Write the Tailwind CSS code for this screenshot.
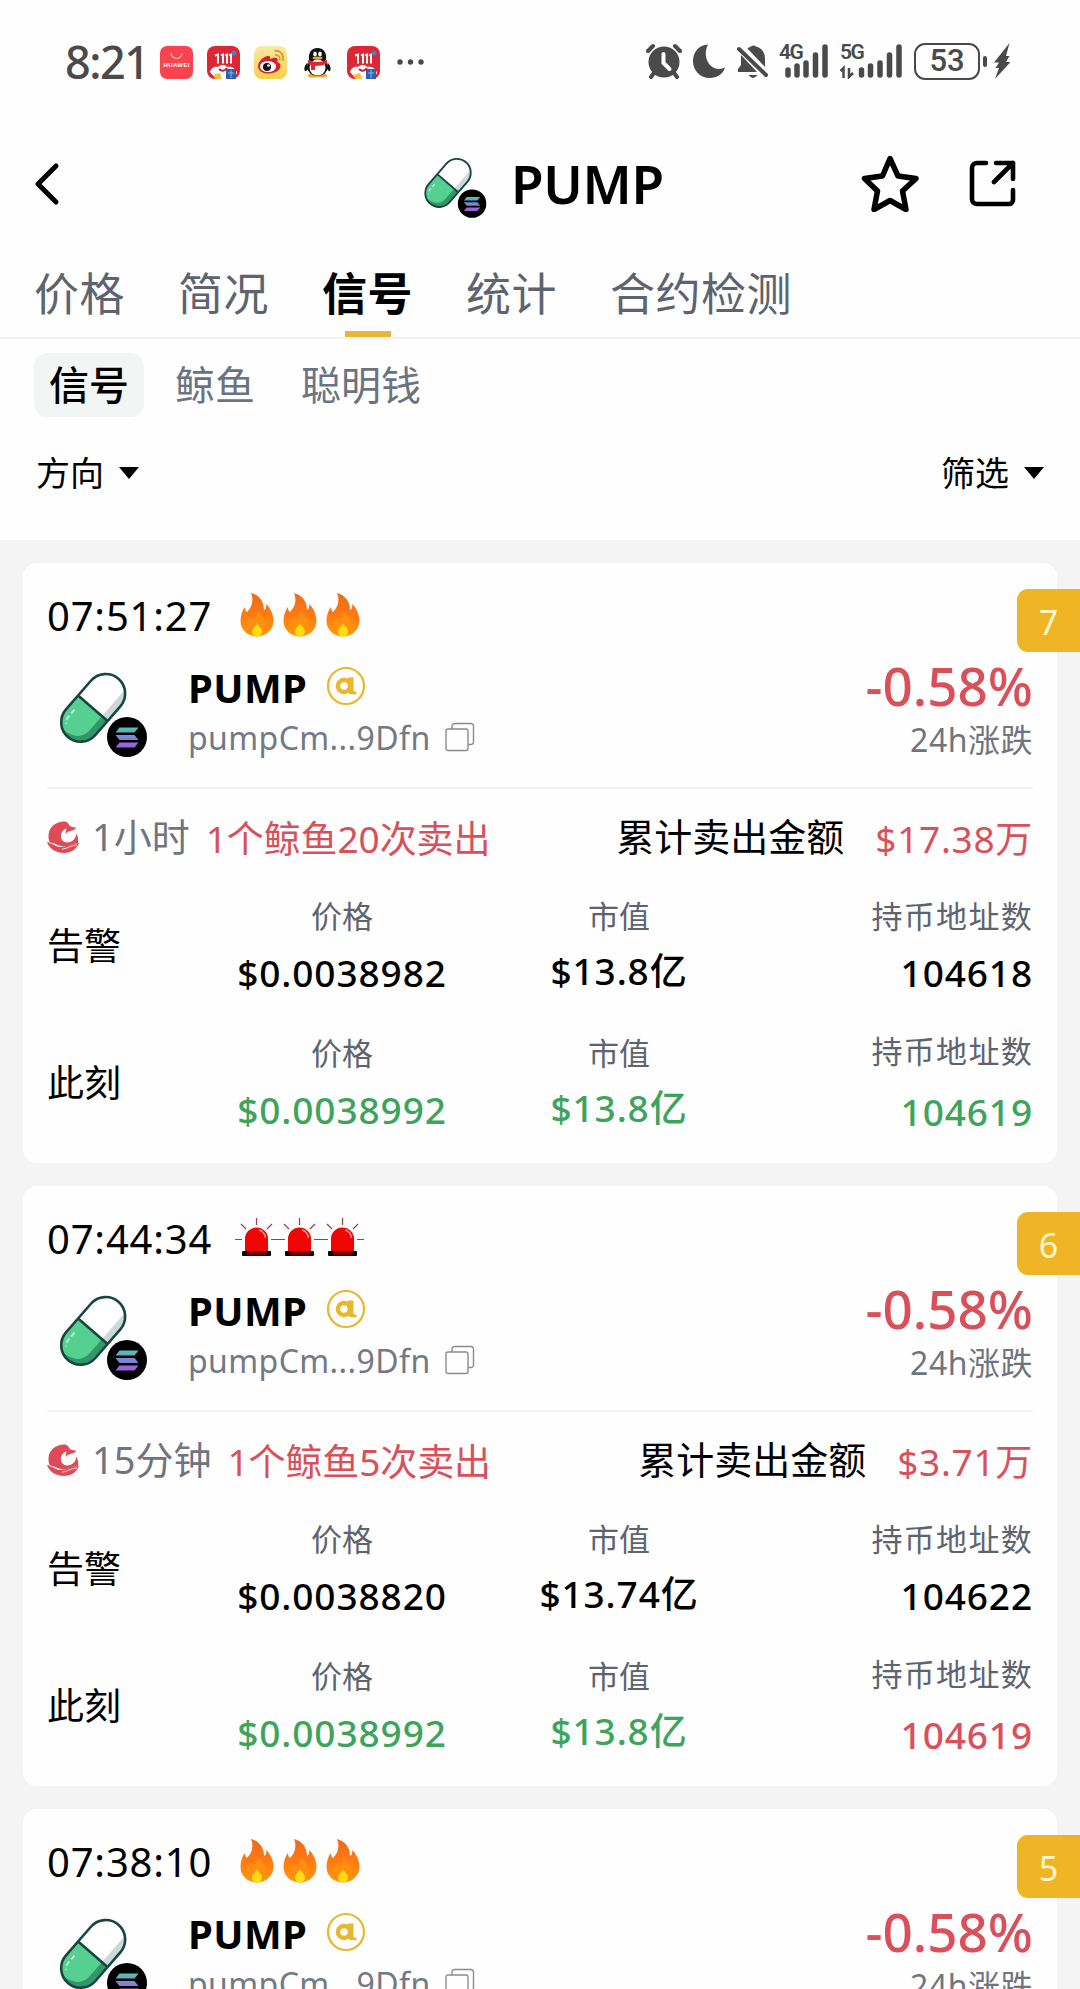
<!DOCTYPE html>
<html lang="zh-CN">
<head>
    <meta charset="UTF-8">
    <meta name="viewport" content="width=device-width, initial-scale=1.0">
    <title>PUMP</title>
    <script src="https://cdn.jsdelivr.net/npm/@tailwindcss/browser@4"></script>
</head>
<body class="flex h-[1989px] w-[1080px] flex-col overflow-hidden bg-[#fefefe] font-['Noto_Sans','Noto_Sans_CJK_SC',sans-serif] text-black">

<!-- shared icons -->
<svg class="absolute h-0 w-0">
    <defs>
        <linearGradient id="sol" gradientUnits="userSpaceOnUse" x1="0" y1="57" x2="0" y2="78">
            <stop offset="0" stop-color="#4cc9b0"/><stop offset="0.5" stop-color="#7d83d6"/><stop offset="1" stop-color="#a557e0"/>
        </linearGradient>
        <linearGradient id="fireFill" x1="0" y1="0" x2="0" y2="1">
            <stop offset="0" stop-color="#ec6a1c"/><stop offset="0.5" stop-color="#ff7a12"/><stop offset="1" stop-color="#ff9a0a"/>
        </linearGradient>
        <linearGradient id="weiboFill" x1="0" y1="0" x2="0" y2="1">
            <stop offset="0" stop-color="#fbe9a6"/><stop offset="1" stop-color="#f8cf45"/>
        </linearGradient>
    </defs>
    <symbol id="pill" viewBox="0 0 90 90">
        <g transform="translate(35.5 37.5) rotate(41)">
            <path d="M-19.500 1V-18.500a19.500 19.500 0 0 1 39 0V1Z" fill="#fff"/>
            <path d="M12 1V-34c5 4 7.500 9 7.500 15.500V1Z" fill="#cdd8d8"/>
            <path d="M-19.500 1V19.500a19.500 19.500 0 0 0 39 0V1Z" fill="#56d090"/>
            <path d="M19.500 1V19.500a19.500 19.500 0 0 1-28 17.500C6 36 12 29 12 19V1Z" fill="#329768"/>
            <path d="M-13 14v9c0 3 1 5 3 7" stroke="#b5f2cf" stroke-width="2" stroke-dasharray="5 3" fill="none"/>
            <path d="M-19.500 1H19.500M-19.500-18.500a19.500 19.500 0 0 1 39 0V19.500a19.500 19.500 0 0 1-39 0Z" fill="none" stroke="#17463f" stroke-width="2.600"/>
        </g>
        <circle cx="69" cy="67" r="20" fill="#000"/>
        <path d="M61.500 57.500h19l-4 5h-19ZM57.500 65h19l4 5h-19ZM61.500 72.500h19l-4 5h-19Z" fill="url(#sol)"/>
    </symbol>
    <symbol id="fire" viewBox="0 0 34 44">
        <path d="M11 0c8 2 13 8 13 17 2-1 2.500-3 2.300-6C30 15 33.500 21 33.500 27.500 33.500 37 26 43.500 17 43.500S.5 37 .5 28C.5 22 2.500 17 5 14c0 2 .5 4 2 5C12 14 14 7 11 0Z" fill="url(#fireFill)"/>
        <path d="M17 17c2 5 9 7 9 15 0 6-4 10-9 10S7 38 7 32c0-4 3-5 4-8 1 1 2 2 2 4 3-2 5-6 4-11Z" fill="#ff8f0f"/>
        <path d="M17 30c1 3 5 5 5 8.500 0 3-2 5-5 5s-5-2-5-5c0-3.500 4-5 5-8.500Z" fill="#ffdc12"/>
    </symbol>
    <symbol id="siren" viewBox="0 0 43 44">
        <path d="M21.500 1v7M6 7l5 5M37 7l-5 5M0 22.500h7M36 22.500h7" stroke="#a03c46" stroke-width="1.200"/>
        <path d="M10 35V22a11.500 11.500 0 0 1 23 0v13Z" fill="#f00505"/>
        <path d="M24 13c4 1 6 4 6.500 8" stroke="#ff8a80" stroke-width="1.500" fill="none"/>
        <rect x="7" y="34" width="29" height="5" rx="1" fill="#150000"/>
        <rect x="12" y="34" width="19" height="4" fill="#6d0000"/>
    </symbol>
    <symbol id="whale" viewBox="0 0 32 32">
        <path d="M18 .6C8 .3 1.500 7 1.500 15c0 3 .5 5 1.500 7 6 0 8 3.500 14 3.500 5 0 8-3 14-3.500.7-4-.2-7-1.800-9.500C29 18 25 21.500 20.500 21.500c-4.500 0-7-3.500-6.500-7.500.5-3.500 2.500-6 5.500-6.500-.5 2-.7 3.500-1 5.500C21.500 9 27 10.500 29.500 6.500 27 6.500 24 6 22.500 4.500 21.500 2.500 20 .8 18 .6Z" fill="#dd4c56"/>
        <path d="M0 21c5 0 8 5 14 5s10-3.500 18-4C29.500 28.500 24 32 17 32 9 32 2.500 28 0 21Z" fill="#dd4c56"/>
        <path d="M2 21.500c5 1 8 4.500 13 4M15 28c5 0 8-3.500 15-4" stroke="#fff" stroke-width=".8" fill="none"/>
    </symbol>
    <symbol id="copy" viewBox="0 0 30 30">
        <path d="M7 7V4a2.500 2.500 0 0 1 2.500-2.500H26A2.500 2.500 0 0 1 28.500 4v16a2.500 2.500 0 0 1-2.500 2.500h-3" fill="none" stroke="#8b8b8f" stroke-width="1.400"/>
        <rect x="1" y="7" width="22" height="21.500" rx="2" fill="none" stroke="#8b8b8f" stroke-width="1.400"/>
    </symbol>
    <symbol id="shop" viewBox="0 0 33 33">
        <rect width="33" height="33" rx="8" fill="#dd2734"/>
        <path d="M8 9.500l3-1v9M14 9.500l2-1v9M18 9.500l2-1v9M22 9.500l2-1v9" stroke="#fff" stroke-width="1.900" fill="none"/>
        <circle cx="27" cy="7" r="2.500" fill="#4a80c4"/>
        <path d="M3 26c1-5 6-6 8-5 3-3 8-2 9 0 5-1 9 2 10 6l-4 6H9Z" fill="#fff"/>
        <path d="M12 23q4 4 8-1" stroke="#c71f2d" stroke-width="2" fill="none"/>
        <path d="M6 29l7-2 2 6H9Z" fill="#f3c23c"/>
        <rect x="19" y="23" width="10" height="10" fill="#2d5fb0"/>
        <path d="M21 27h6M24 24v8" stroke="#8db4ea" stroke-width="1"/>
    </symbol>
</svg>

<!-- status bar -->
<div class="flex h-[124px] shrink-0 items-center justify-between pr-[69px] pl-[65px] text-[#4a4a4a]">
    <div class="flex items-center">
        <span class="w-[95px] text-[45px] leading-[50px] font-medium tracking-[-1.5px]">8:21</span>
        <svg class="h-[33px] w-[33px]" viewBox="0 0 33 33">
            <rect width="33" height="33" rx="7" fill="#f9434f"/>
            <path d="M11 7a5.500 5.500 0 0 0 11 0" stroke="#ffc2b0" stroke-width="1.200" fill="none"/>
            <text x="16.500" y="21" text-anchor="middle" textLength="26" font-family="Liberation Sans" font-size="6" font-weight="bold" fill="#fff">HUAWEI</text>
        </svg>
        <svg class="ml-[14px] h-[33px] w-[33px]"><use href="#shop"/></svg>
        <svg class="ml-[14px] h-[33px] w-[33px]" viewBox="0 0 33 33">
            <rect width="33" height="33" rx="8" fill="url(#weiboFill)"/>
            <path d="M4 20c0-5 7-11 11-10 2 .5 1 3 1 3s6-3 7.500 0c.5 1.500-.5 3-.5 3s4 1 3.500 4.500C26 25 20 27.500 14 27.500S4 24.500 4 20Z" fill="#d9212c"/>
            <ellipse cx="14" cy="20.500" rx="8" ry="5.500" fill="#fff"/>
            <circle cx="13" cy="21" r="4" fill="#151515"/><circle cx="14.500" cy="19.500" r="1.300" fill="#fff"/>
            <path d="M21 9c3-.5 5.500 2 4.500 5M20.500 5c6-1 10 4 8 10" fill="none" stroke="#d9a233" stroke-width="2"/>
        </svg>
        <svg class="ml-[17px] h-[33px] w-[27px]" viewBox="0 0 27 33">
            <path d="M3 17c-3 3-3 7-2 8s3-2 3-2M24 17c3 3 3 7 2 8s-3-2-3-2" fill="#111"/>
            <ellipse cx="9" cy="29.500" rx="5" ry="2" fill="#f4a61f"/><ellipse cx="18" cy="29.500" rx="5" ry="2" fill="#f4a61f"/>
            <ellipse cx="13.500" cy="20.500" rx="10.500" ry="9.500" fill="#111"/>
            <path d="M5 14C4 6 8 2 13.500 2S23 6 22 14Z" fill="#111"/>
            <ellipse cx="13.500" cy="21.500" rx="8" ry="8" fill="#fff"/>
            <ellipse cx="11" cy="8" rx="1.800" ry="2.500" fill="#fff"/><ellipse cx="16" cy="8" rx="1.800" ry="2.500" fill="#fff"/>
            <ellipse cx="13.500" cy="12" rx="5" ry="1.500" fill="#f4a61f"/>
            <path d="M4 14q9.500 4 19 0v4q-6 2-12 2v4H7v-5l-3-1Z" fill="#df2530"/>
        </svg>
        <svg class="ml-[16px] h-[33px] w-[33px]"><use href="#shop"/></svg>
        <svg class="ml-[17px] h-[6px] w-[28px]" viewBox="0 0 28 6" fill="currentColor"><circle cx="3" cy="3" r="2.700"/><circle cx="13.500" cy="3" r="2.700"/><circle cx="24" cy="3" r="2.700"/></svg>
    </div>
    <div class="flex items-center pb-[2px]">
        <svg class="h-[36px] w-[36px]" viewBox="0 0 36 36" fill="currentColor">
            <circle cx="18" cy="19" r="15.500"/>
            <path d="M2 8l5-5M34 8l-5-5M8 30l-3 4M28 30l3 4" stroke="currentColor" stroke-width="4" stroke-linecap="round"/>
            <path d="M17.500 11v9l6 6" stroke="#fff" stroke-width="4" stroke-linecap="round" fill="none"/>
        </svg>
        <svg class="ml-[11px] h-[34px] w-[33px]" viewBox="0 0 33 34"><path d="M15 .5C6 1 0 8 0 17c0 10 7.500 17 16.500 17C24 34 30 30 32 23.500c-5 2.500-11 1.500-14.500-2C12 16 11.500 7 15 .5Z" fill="currentColor"/></svg>
        <svg class="ml-[11px] h-[36px] w-[32px]" viewBox="0 0 32 36">
            <path d="M10.500 5.500C11.500 4.500 12.500 4 14 3.500a4 4 0 0 1 5 0C25 5 28 10 28 16v8ZM4 12l16 17H1v-3l3-4Z" fill="currentColor"/>
            <path d="M3 4l27 26" stroke="#fefefe" stroke-width="4"/>
            <path d="M2 6l27 26" stroke="currentColor" stroke-width="4" stroke-linecap="round"/>
            <path d="M11.500 32h9q-4.500 6-9 0Z" fill="currentColor"/>
        </svg>
        <div class="ml-[10px] flex h-[36px] w-[52px]">
            <span class="-mr-[25px] -mt-[4px] w-[25px] text-[21px] leading-[26px] font-semibold tracking-[-1.5px] font-['Roboto']">4G</span>
            <svg class="h-[36px] w-[52px] shrink-0" viewBox="2 0 52 36"><path d="M11 27v5M20 23v9M29 20v12M38.500 12v20M48 4v28" stroke="currentColor" stroke-width="5.500" stroke-linecap="round"/></svg>
        </div>
        <div class="ml-[9px] flex h-[36px] w-[65px]">
            <span class="-mr-[25px] -mt-[4px] w-[25px] text-[21px] leading-[26px] font-semibold tracking-[-1.5px] font-['Roboto']">5G</span>
            <svg class="h-[36px] w-[65px] shrink-0" viewBox="1 0 65 36">
                <path d="M22.500 27v5M31.500 23v9M41 20v12M50.500 12v20M60 4v28" stroke="currentColor" stroke-width="5.500" stroke-linecap="round"/>
                <path d="M1.500 28l3-3v10M10 25v9l4-4" fill="none" stroke="currentColor" stroke-width="2.500"/>
            </svg>
        </div>
        <div class="ml-[9px] flex h-[37px] w-[66px] items-center justify-center rounded-[11px] border-[2.5px] border-[#4a4a4a] font-['Roboto'] text-[31px] leading-[34px] font-medium">53</div>
        <div class="ml-[3px] h-[11px] w-[4px] rounded-full bg-[#4a4a4a]"></div>
        <svg class="ml-[7px] h-[36px] w-[17px]" viewBox="0 0 17 36"><path d="M15.500 0L0 19.500h5L1.500 25H5L1 36l15.500-17H12l3.500-6H12Z" fill="currentColor"/></svg>
    </div>
</div>

<!-- header -->
<div class="flex h-[120px] shrink-0 items-center">
    <svg class="ml-[34px] h-[44px] w-[26px]" viewBox="0 0 26 44"><path d="M22 4L4 22l18 18" fill="none" stroke="#000" stroke-width="5" stroke-linecap="round" stroke-linejoin="round"/></svg>
    <svg class="mt-[8px] ml-[363px] h-[64px] w-[64px]"><use href="#pill"/></svg>
    <span class="ml-[24px] w-[200px] text-[53px] leading-[60px] font-semibold tracking-[-0.3px]">PUMP</span>
    <svg class="-mt-[3px] ml-[149px] h-[58px] w-[60px]" viewBox="0 0 60 58"><path d="M30 4.500l8 17.500 18 2.500-13.500 12.500 3.500 18.500-16-9-16 9 3.500-18.500L4.500 24.500 22.500 22Z" fill="none" stroke="#000" stroke-width="5.500" stroke-linejoin="round"/></svg>
    <svg class="-mt-[2px] ml-[48px] h-[48px] w-[48px]" viewBox="0 0 48 48" fill="none" stroke="#000" stroke-width="4.600" stroke-linecap="round" stroke-linejoin="round"><path d="M18 4H9a5 5 0 0 0-5 5v31a5 5 0 0 0 5 5h32a4 4 0 0 0 4-4V31M28 4h17v16M45 4L26 23"/></svg>
</div>

<!-- main tabs -->
<div class="flex h-[95px] shrink-0 gap-[53px] border-b-2 border-[#f2f2f3] pl-[34px] text-[45px] leading-[100px] tracking-[0.5px] text-[#5d6470]">
    <span>价格</span>
    <span>简况</span>
    <span class="relative font-bold text-black">信号<i class="absolute bottom-0 left-[23px] h-[6px] w-[46px] bg-[#e8b73a]"></i></span>
    <span>统计</span>
    <span>合约检测</span>
</div>

<!-- sub tabs -->
<div class="mt-[14px] flex h-[64px] shrink-0 gap-[16px] pl-[34px] text-[40px] leading-[64px] text-[#6b7381]">
    <span class="rounded-[13px] bg-[#f3f5f5] px-[15px] font-medium text-black">信号</span>
    <span class="px-[15px]">鲸鱼</span>
    <span class="px-[15px]">聪明钱</span>
</div>

<!-- filters -->
<div class="flex h-[123px] shrink-0 items-start justify-between pt-[31px] pr-[35px] pl-[36px] text-[34px] leading-[50px]">
    <span class="flex items-center gap-[14px]">方向<svg class="h-[12px] w-[22px]" viewBox="0 0 22 12"><path d="M1 0h20L11 12Z"/></svg></span>
    <span class="flex items-center gap-[14px]">筛选<svg class="h-[12px] w-[22px]" viewBox="0 0 22 12"><path d="M1 0h20L11 12Z"/></svg></span>
</div>

<!-- signal list -->
<div id="signalList" class="flex min-h-0 grow flex-col gap-[23px] overflow-hidden bg-[#f4f4f4] pt-[23px] pl-[23px]"></div>

<script>
    const RED = "text-[#d9505a]";
    const GREEN = "text-[#3da45c]";

    const signals = [
        {
            time: "07:51:27", icon: "fire", no: 7, period: "1小时", action: "1个鲸鱼20次卖出", total: "$17.38万",
            alert: ["$0.0038982", "$13.8亿", "104618"], now: ["$0.0038992", "$13.8亿", "104619"], holders: GREEN
        },
        {
            time: "07:44:34", icon: "siren", no: 6, period: "15分钟", action: "1个鲸鱼5次卖出", total: "$3.71万",
            alert: ["$0.0038820", "$13.74亿", "104622"], now: ["$0.0038992", "$13.8亿", "104619"], holders: RED
        },
        { time: "07:38:10", icon: "fire", no: 5 }
    ];

    function level(icon) {
        if (icon === "fire") {
            const one = `<svg class="h-[44px] w-[34px]"><use href="#fire" width="34" height="44"/></svg>`;
            return `<div class="-mt-[3px] ml-[28px] flex gap-[9px]">${one.repeat(3)}</div>`;
        }
        const one = `<svg class="h-[44px] w-[43px]"><use href="#siren" width="43" height="44"/></svg>`;
        return `<div class="ml-[23px] flex">${one.repeat(3)}</div>`;
    }

    function dataRow(title, values, colors, margin, last) {
        return `
        <div class="${margin} flex h-[99px] items-center">
            <div class="w-[156px] pb-[4px] text-[37px] leading-[48px]">${title}</div>
            <div class="w-[278px] text-center">
                <div class="text-[31px] leading-[36px] text-[#5d6470]">价格</div>
                <div class="mt-[15px] text-[37px] leading-[48px] font-medium tracking-[0.9px] ${colors[0]}">${values[0]}</div>
            </div>
            <div class="w-[276px] text-center">
                <div class="text-[31px] leading-[36px] text-[#5d6470]">市值</div>
                <div class="mt-[13px] mb-[2px] text-[37px] leading-[48px] font-medium tracking-[0.9px] ${colors[1]}">${values[1]}</div>
            </div>
            <div class="grow text-right">
                <div class="text-[31px] leading-[36px] tracking-[1.3px] text-[#5d6470]">持币地址数</div>
                <div class="${last} text-[37px] leading-[48px] font-medium tracking-[0.9px] ${colors[2]}">${values[2]}</div>
            </div>
        </div>`;
    }

    function details(s) {
        return `
            <div class="mt-[24px] flex h-[48px] items-center text-[38px] leading-[48px]">
                <svg class="h-[32px] w-[32px]"><use href="#whale"/></svg>
                <span class="-mt-[3px] ml-[13px] text-[#6f7580]">${s.period}</span>
                <span class="mt-[3px] ml-[16px] text-[37px] tracking-[-0.1px] ${RED}">${s.action}</span>
                <span class="-mt-[3px] ml-auto">累计卖出金额</span>
                <span class="mt-[3px] ml-[31px] text-[37px] tracking-[0.7px] ${RED}">${s.total}</span>
            </div>
            ${dataRow("告警", s.alert, ["text-black", "text-black", "text-black"], "mt-[37px]", "mt-[15px]")}
            ${dataRow("此刻", s.now, [GREEN, GREEN, s.holders], "mt-[38px]", "mt-[19px]")}`;
    }

    document.getElementById("signalList").innerHTML = signals.map(s => `
        <div class="relative h-[600px] w-[1034px] shrink-0 rounded-[14px] bg-[#fefefe] pt-[31px] pr-[24px] pl-[24px]">
            <div class="absolute top-[26px] left-[994px] h-[63px] w-[63px] rounded-l-[11px] bg-[#f0b524] text-center text-[34px] leading-[67px] text-[#fff6d0]">${s.no}</div>
            <div class="flex h-[44px] items-center text-[40px] leading-[44px] tracking-[0.8px]">
                <span class="w-[165px]">${s.time}</span>${level(s.icon)}
            </div>
            <div class="mt-[20px] flex h-[110px]">
                <svg class="mt-[12px] ml-[11px] h-[90px] w-[90px]"><use href="#pill"/></svg>
                <div class="ml-[40px] pt-[1px]">
                    <div class="flex h-[54px] items-center">
                        <span class="mt-[3px] w-[138px] text-[40px] leading-[54px] font-bold tracking-[0.4px]">PUMP</span>
                        <svg class="h-[40px] w-[40px]" viewBox="0 0 40 40">
                            <circle cx="20" cy="20" r="18" fill="none" stroke="#eab62c" stroke-width="2.200"/>
                            <circle cx="18" cy="20" r="6" fill="none" stroke="#eab62c" stroke-width="4.500"/>
                            <path d="M22 11.500h5.500v13q0 1.500 3 1.300v2.500h-5q-3 0-3.500-3Z" fill="#eab62c"/>
                        </svg>
                    </div>
                    <div class="flex h-[48px] items-center text-[32px] leading-[48px] tracking-[0.4px] text-[#737985]">
                        <span class="mt-[2px] w-[257px]">pumpCm...9Dfn</span>
                        <svg class="h-[30px] w-[30px]"><use href="#copy"/></svg>
                    </div>
                </div>
                <div class="ml-auto text-right">
                    <div class="text-[53px] leading-[55px] font-medium ${RED}">-0.58%</div>
                    <div class="mt-[2px] text-[32px] leading-[50px] tracking-[0.5px] text-[#6f7580]">24h涨跌</div>
                </div>
            </div>
            <div class="mt-[19px] h-[2px] bg-[#f3f3f3]"></div>
            ${s.alert ? details(s) : ""}
        </div>`).join("");
</script>
</body>
</html>
